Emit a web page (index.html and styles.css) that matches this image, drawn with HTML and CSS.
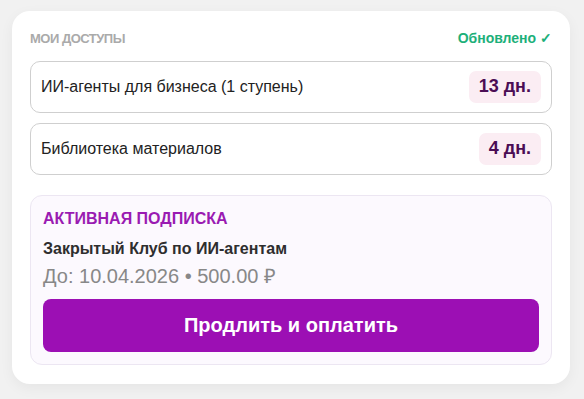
FILE: index.html
```html
<!DOCTYPE html>
<html lang="ru">
<head>
<meta charset="utf-8">
<link rel="stylesheet" href="styles.css">
</head>
<body>
<div class="card">
  <div class="head">
    <span class="title">МОИ ДОСТУПЫ</span>
    <span class="updated">Обновлено ✓</span>
  </div>
  <div class="row">
    <span class="name">ИИ-агенты для бизнеса (1 ступень)</span>
    <span class="badge">13 дн.</span>
  </div>
  <div class="row">
    <span class="name">Библиотека материалов</span>
    <span class="badge">4 дн.</span>
  </div>
  <div class="sub">
    <div class="sub-label">АКТИВНАЯ ПОДПИСКА</div>
    <div class="sub-name">Закрытый Клуб по ИИ-агентам</div>
    <div class="sub-meta">До: 10.04.2026 • 500.00 ₽</div>
    <button class="btn">Продлить и оплатить</button>
  </div>
</div>
</body>
</html>
```
FILE: styles.css
```css
html, body { margin: 0; padding: 0; }
body {
  background: #f1f1f1;
  font-family: "Liberation Sans", Arial, sans-serif;
  width: 584px;
  height: 399px;
  overflow: hidden;
}
.card {
  margin: 11px 0 0 12px;
  width: 558px;
  box-sizing: border-box;
  background: #fff;
  border-radius: 18px;
  box-shadow: 0 4px 14px rgba(0,0,0,0.05);
  padding: 19px 18px 19px;
  display: flex;
  flex-direction: column;
}
.card > * { flex-shrink: 0; }
.head {
  display: flex;
  justify-content: space-between;
  align-items: center;
  height: 16px;
  margin-bottom: 15px;
}
.title {
  font-size: 13px;
  font-weight: 700;
  color: #aaaaaa;
  letter-spacing: -0.5px;
}
.updated {
  font-size: 14px;
  font-weight: 700;
  color: #1db07a;
}
.row {
  height: 52px;
  box-sizing: border-box;
  border: 1px solid #cfcfcf;
  border-radius: 10px;
  display: flex;
  align-items: center;
  justify-content: space-between;
  padding: 0 10px 0 10px;
  margin-bottom: 10px;
}
.name {
  font-size: 16px;
  color: #222;
}
.badge {
  background: #fbedf3;
  color: #4b0d55;
  font-weight: 700;
  font-size: 18px;
  border-radius: 7px;
  padding: 5px 10px 6px;
}
.sub {
  margin-top: 10px;
  border: 1px solid #ece6f2;
  background: #fcf9fe;
  border-radius: 12px;
  padding: 14px 12px 12px;
  display: flex;
  flex-direction: column;
}
.sub-label {
  color: #9a1bb2;
  font-weight: 700;
  font-size: 16px;
  line-height: 18px;
}
.sub-name {
  margin-top: 12px;
  font-size: 16px;
  line-height: 18px;
  font-weight: 700;
  color: #2e2e2e;
}
.sub-meta {
  margin-top: 7px;
  font-size: 20px;
  line-height: 23px;
  color: #888;
}
.btn {
  margin-top: 11px;
  height: 53px;
  border: none;
  border-radius: 8px;
  background: #9c0fb4;
  color: #fff;
  font-family: inherit;
  font-size: 20px;
  font-weight: 700;
}
```
